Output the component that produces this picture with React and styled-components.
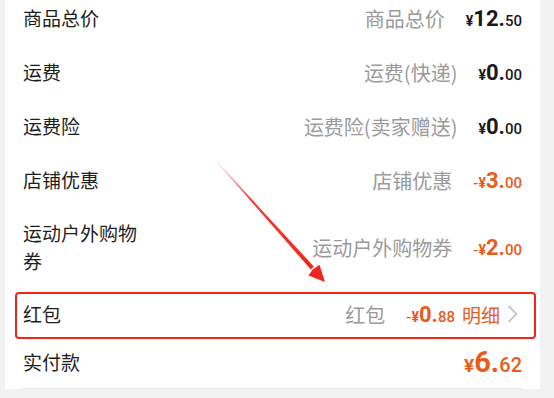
import React from "react";
import styled, { createGlobalStyle } from "styled-components";

const GlobalStyle = createGlobalStyle`
  html, body {
    margin: 0;
    padding: 0;
    background: #f2f2f2;
    overflow: hidden;
  }
  body {
    font-family: "Noto Sans CJK SC", "Noto Sans", sans-serif;
  }
`;

const Page = styled.div`
  position: relative;
  width: 554px;
  height: 398px;
  overflow: hidden;
  padding: 0 14px 0 5px;
  box-sizing: border-box;
`;

const Card = styled.div`
  background: #fff;
  margin-top: -9px;
  padding: 0 18px;
  display: flex;
  flex-direction: column;
`;

const Row = styled.div`
  display: flex;
  align-items: center;
  justify-content: space-between;
  min-height: ${(p) => p.$h || 54}px;
  padding: ${(p) => (p.$tall ? "12px 0" : "0")};
  box-sizing: border-box;
`;

const Label = styled.div`
  font-size: 19px;
  line-height: 28px;
  color: #1e1e1e;
  max-width: 118px;
`;

const Right = styled.div`
  display: flex;
  align-items: center;
  gap: 21px;
`;

const Note = styled.span`
  font-size: 20px;
  color: #9a9a9a;
  white-space: nowrap;
`;

const Amount = styled.span`
  font-family: Roboto, "Liberation Sans", sans-serif;
  font-weight: 700;
  color: ${(p) => (p.$orange ? "#e95b1b" : "#1a1a1a")};
  white-space: nowrap;
  display: inline-flex;
  align-items: baseline;
`;

const Small = styled.span`
  font-size: ${(p) => p.$size || 14}px;
  font-weight: ${(p) => p.$weight || 700};
`;

const Big = styled.span`
  font-size: ${(p) => p.$size || 22}px;
`;

const Detail = styled.span`
  display: inline-flex;
  align-items: center;
  gap: 7px;
  margin-left: -14px;
  margin-right: 4px;
  font-size: 19px;
  color: #e95b1b;
`;

const Divider = styled.div`
  height: 1px;
  background: #e8e8e8;
  margin-top: 5px;
`;

// annotation layer: arrow + red box drawn over the screenshot
const Overlay = styled.svg`
  position: absolute;
  left: 0;
  top: 0;
  pointer-events: none;
`;

function Money({ sign, int, dec, orange, total }) {
  return (
    <Amount $orange={orange}>
      {sign && <Small $size={15} $weight={500}>{sign}</Small>}
      <Small $size={total ? 19 : 14}>¥</Small>
      <Big $size={total ? 29 : 22}>{int}.</Big>
      <Small $size={total ? 20 : 15} $weight={500}>{dec}</Small>
    </Amount>
  );
}

const Chevron = () => (
  <svg width="11" height="20" viewBox="0 0 11 20">
    <polyline points="1.5,2 9.5,10 1.5,18" fill="none" stroke="#bdbdbd" strokeWidth="1.6" />
  </svg>
);

export default function App() {
  return (
    <Page>
      <GlobalStyle />
      <Card>
        <Row>
          <Label>商品总价</Label>
          <Right>
            <Note>商品总价</Note>
            <Money int="12" dec="50" />
          </Right>
        </Row>
        <Row>
          <Label>运费</Label>
          <Right>
            <Note>运费(快递)</Note>
            <Money int="0" dec="00" />
          </Right>
        </Row>
        <Row>
          <Label>运费险</Label>
          <Right>
            <Note>运费险(卖家赠送)</Note>
            <Money int="0" dec="00" />
          </Right>
        </Row>
        <Row>
          <Label>店铺优惠</Label>
          <Right>
            <Note>店铺优惠</Note>
            <Money sign="-" int="3" dec="00" orange />
          </Right>
        </Row>
        <Row $tall>
          <Label>运动户外购物券</Label>
          <Right>
            <Note>运动户外购物券</Note>
            <Money sign="-" int="2" dec="00" orange />
          </Right>
        </Row>
        <Row>
          <Label>红包</Label>
          <Right>
            <Note>红包</Note>
            <Money sign="-" int="0" dec="88" orange />
            <Detail>
              明细
              <Chevron />
            </Detail>
          </Right>
        </Row>
        <Row $h={42}>
          <Label>实付款</Label>
          <Right>
            <Money int="6" dec="62" orange total />
          </Right>
        </Row>
        <Divider />
      </Card>
      <Overlay width="554" height="398" viewBox="0 0 554 398">
        <defs>
          <linearGradient id="shaft" x1="217" y1="162" x2="314" y2="270" gradientUnits="userSpaceOnUse">
            <stop offset="0" stopColor="#f3241c" stopOpacity="0.15" />
            <stop offset="0.35" stopColor="#f3241c" stopOpacity="0.9" />
            <stop offset="1" stopColor="#f3241c" />
          </linearGradient>
        </defs>
        <polygon points="216.8,162.2 217.2,161.8 313.8,266.5 310.8,269.5" fill="url(#shaft)" />
        <polygon points="325,282 308.5,275.5 312.5,269.8 319.5,264.8" fill="#f3241c" />
        <rect x="16" y="293" width="519" height="45" rx="3" fill="none" stroke="#f3241c" strokeWidth="2" />
      </Overlay>
    </Page>
  );
}
